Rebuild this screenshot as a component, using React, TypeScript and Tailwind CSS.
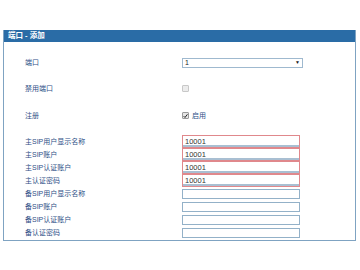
import React from 'react';

const labelCls = 'w-[157px] shrink-0 text-[7px] leading-none text-[#2f5087]';
const font = { fontFamily: '"Liberation Sans", "Noto Sans CJK SC", sans-serif' };

const mainRows = ['主SIP用户显示名称', '主SIP账户', '主SIP认证账户', '主认证密码'];
const backupRows = ['备SIP用户显示名称', '备SIP账户', '备SIP认证账户', '备认证密码'];

function Row({ label, children, className = '' }: { label: string; children?: React.ReactNode; className?: string }) {
  return (
    <div className={`flex h-[13px] items-center pl-[21px] ${className}`}>
      <div className={labelCls}>{label}</div>
      <div className="flex items-center">{children}</div>
    </div>
  );
}

export default function App() {
  return (
    <div className="h-[270px] w-[360px] bg-white pt-[30px] pl-[3px]" style={font}>
      <div className="w-[353px] border border-t-0 border-[#7fa3c2] bg-white pb-[1px]">
        <div className="flex h-[12px] items-center bg-[#2a6ca6] pl-[4px] text-[7.5px] font-bold leading-none text-white">
          端口 - 添加
        </div>

        <Row label="端口" className="mt-[14px]">
          <div className="flex h-[10px] w-[121px] items-center justify-between border border-[#9fb9cf] bg-white px-[2px] text-[7px] leading-none text-[#222]">
            <span>1</span>
            <span className="text-[5px]">▼</span>
          </div>
        </Row>

        <Row label="禁用端口" className="mt-[13px]">
          <div className="h-[7px] w-[7px] rounded-[1px] border border-[#c8c8c8] bg-[#ececec]" />
        </Row>

        <Row label="注册" className="mt-[14px]">
          <div className="flex items-center gap-[3px]">
            <div className="flex h-[7px] w-[7px] items-center justify-center rounded-[1px] border border-[#9a9a9a] bg-[#e6e6e6]">
              <svg width="6" height="6" viewBox="0 0 6 6">
                <path d="M0.8 3.2 L2.4 4.8 L5.3 1" stroke="#222" strokeWidth="1.2" fill="none" />
              </svg>
            </div>
            <span className="text-[7px] leading-none text-[#2f5087]">启用</span>
          </div>
        </Row>

        <div className="mt-[13px]">
          {mainRows.map((l) => (
            <Row key={l} label={l}>
              <div className="flex h-[13px] w-[118px] items-center border border-[#e0888c] bg-white pl-[2px] text-[7.5px] leading-none text-[#333] shadow-[inset_0_-2px_0_#a9bfd2]">
                10001
              </div>
            </Row>
          ))}
          {backupRows.map((l) => (
            <Row key={l} label={l}>
              <div className="h-[10px] w-[118px] border border-[#93b1c8] bg-white" />
            </Row>
          ))}
        </div>
      </div>
    </div>
  );
}
